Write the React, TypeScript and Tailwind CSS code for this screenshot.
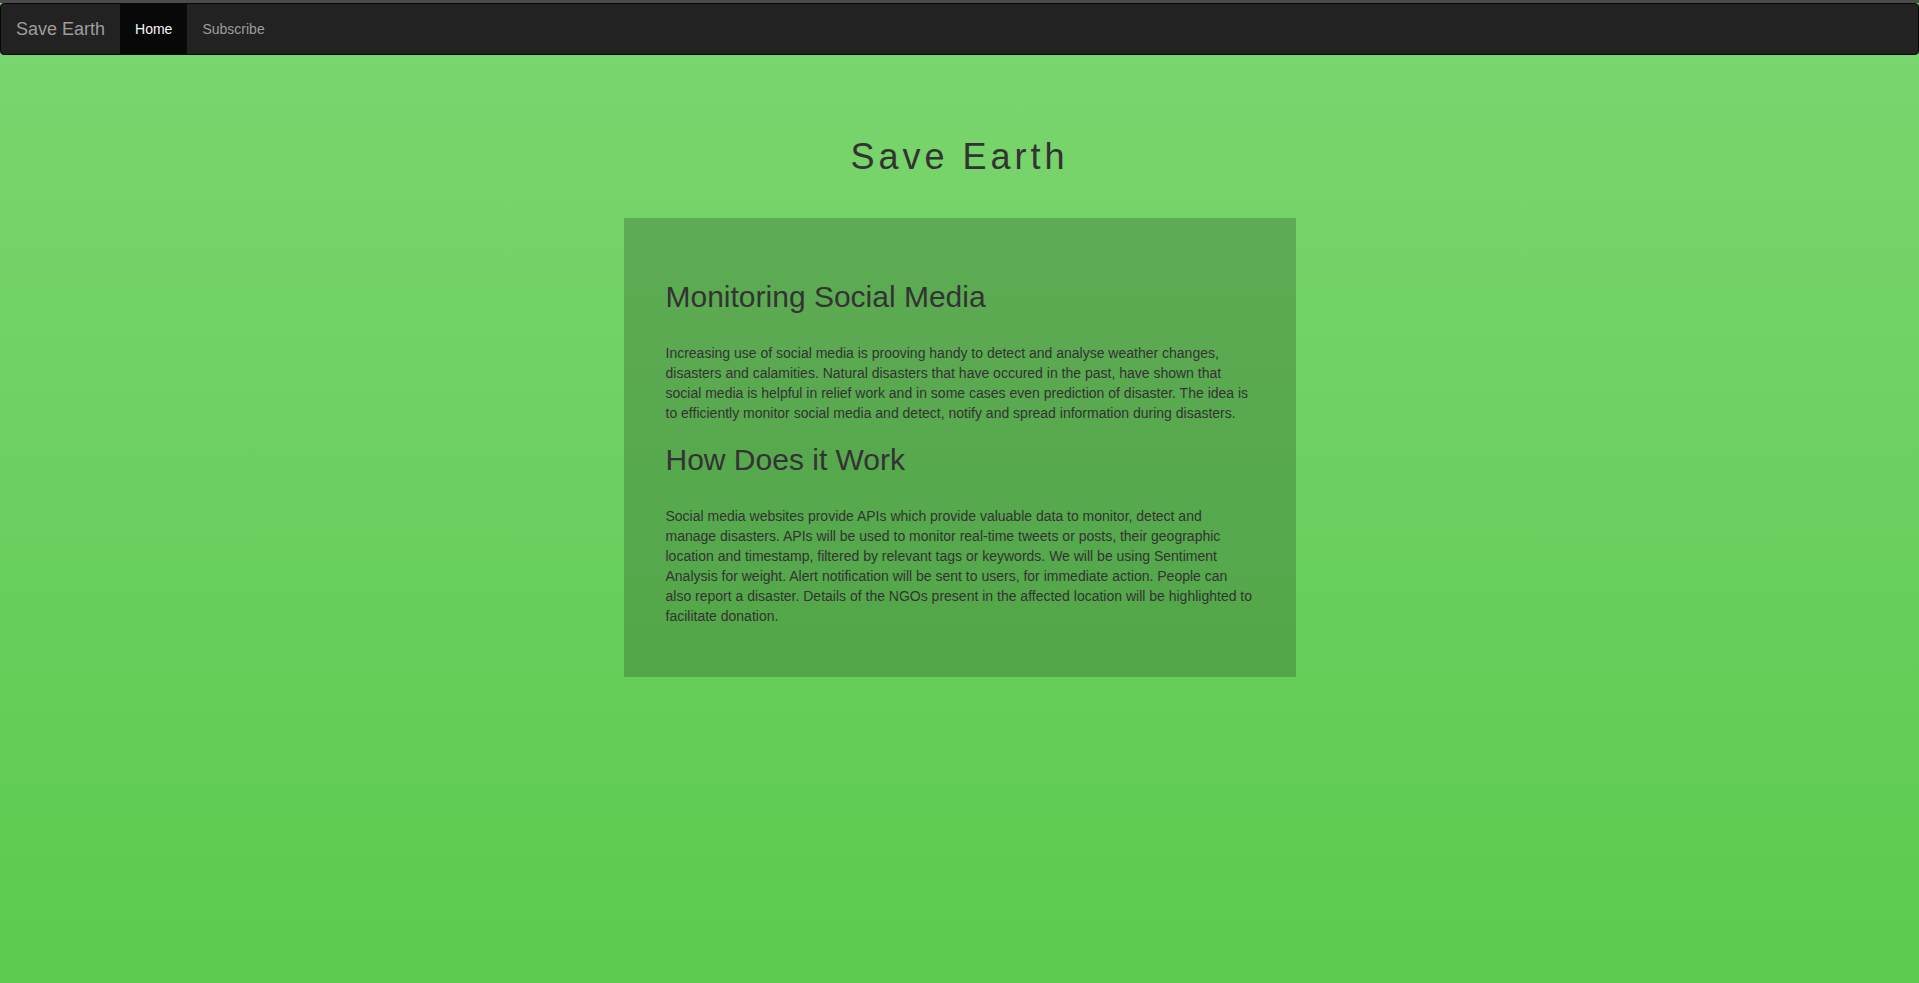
export default function App() {
  return (
    <div
      className="min-h-screen w-full bg-linear-to-b from-[#7bd670] to-[#5bca4e] text-[#333]"
      style={{ fontFamily: '"Liberation Sans", Arial, Helvetica, sans-serif' }}
    >
      <div className="h-[3px] bg-[#4a4a4a]" />
      <nav className="flex h-[52px] items-stretch rounded-[4px] border border-[#080808] bg-[#222]">
        <a href="#" className="px-[15px] py-[15px] text-[18px] leading-[20px] text-[#9d9d9d]">
          Save Earth
        </a>
        <a href="#" className="bg-[#080808] px-[15px] py-[15px] text-[14px] leading-[20px] text-[#f5f5f5]">
          Home
        </a>
        <a href="#" className="px-[15px] py-[15px] text-[14px] leading-[20px] text-[#9d9d9d]">
          Subscribe
        </a>
      </nav>

      <main className="flex flex-col items-center pt-[82px]">
        <h1 className="text-[36px] leading-[40px] tracking-[4px]">Save Earth</h1>

        <section className="mt-[41px] w-[672px] bg-black/[0.19] px-[42px] pt-[62px] pb-[51px]">
          <h2 className="text-[30px] leading-[33px]">Monitoring Social Media</h2>
          <p className="mt-[30px] text-[14px] leading-[20px]">
            Increasing use of social media is prooving handy to detect and analyse weather changes,
            disasters and calamities. Natural disasters that have occured in the past, have shown
            that social media is helpful in relief work and in some cases even prediction of
            disaster. The idea is to efficiently monitor social media and detect, notify and spread
            information during disasters.
          </p>

          <h2 className="mt-[20px] text-[30px] leading-[33px]">How Does it Work</h2>
          <p className="mt-[30px] text-[14px] leading-[20px]">
            Social media websites provide APIs which provide valuable data to monitor, detect and
            manage disasters. APIs will be used to monitor real-time tweets or posts, their
            geographic location and timestamp, filtered by relevant tags or keywords. We will be
            using Sentiment Analysis for weight. Alert notification will be sent to users, for
            immediate action. People can also report a disaster. Details of the NGOs present in the
            affected location will be highlighted to facilitate donation.
          </p>
        </section>
      </main>
    </div>
  );
}
